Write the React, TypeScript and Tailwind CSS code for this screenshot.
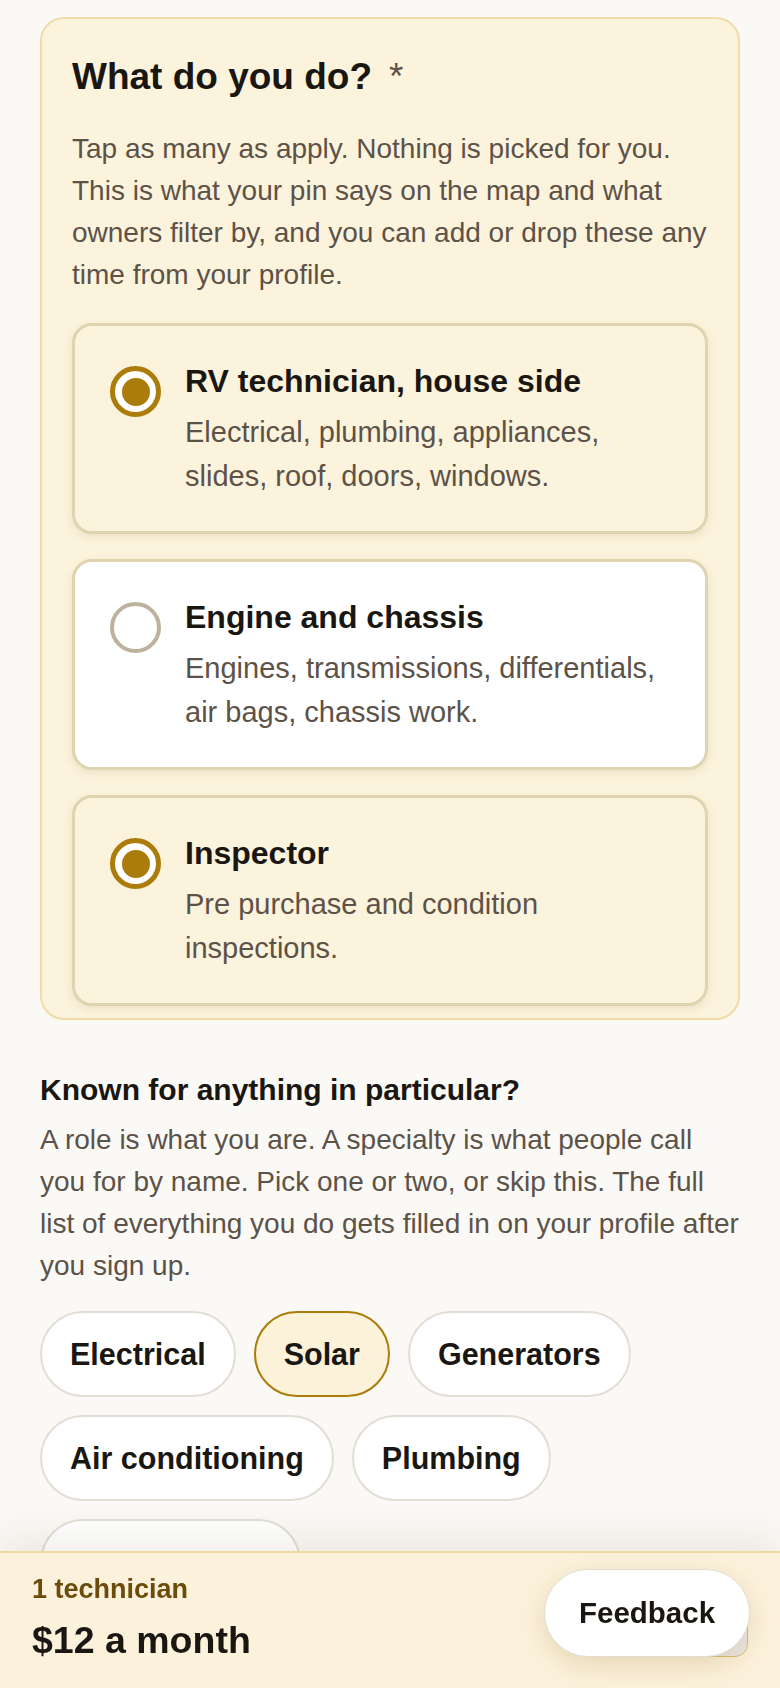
import { useState } from "react"

const roles = [
  {
    id: "house",
    title: "RV technician, house side",
    desc: "Electrical, plumbing, appliances, slides, roof, doors, windows.",
  },
  {
    id: "chassis",
    title: "Engine and chassis",
    desc: "Engines, transmissions, differentials, air bags, chassis work.",
  },
  {
    id: "inspector",
    title: "Inspector",
    desc: "Pre purchase and condition inspections.",
  },
]

const specialties = ["Electrical", "Solar", "Generators", "Air conditioning", "Plumbing"]

function Radio({ checked }: { checked: boolean }) {
  if (checked) {
    return (
      <span className="mt-[5px] flex h-[51px] w-[51px] shrink-0 items-center justify-center rounded-full border-[5px] border-[#ab7b0b] bg-white">
        <span className="h-[28px] w-[28px] rounded-full bg-[#ab7b0b]" />
      </span>
    )
  }
  return <span className="mt-[5px] h-[51px] w-[51px] shrink-0 rounded-full border-[4px] border-[#bdb29c] bg-white" />
}

export default function App() {
  const [picked, setPicked] = useState<string[]>(["house", "inspector"])
  const [special, setSpecial] = useState<string[]>(["Solar"])

  const toggle = (id: string) =>
    setPicked((p) => (p.includes(id) ? p.filter((x) => x !== id) : [...p, id]))
  const toggleSpecial = (s: string) =>
    setSpecial((p) => (p.includes(s) ? p.filter((x) => x !== s) : [...p, s]))

  return (
    <div className="min-h-screen bg-[#faf9f5] font-['Liberation_Sans',Arial,sans-serif] text-[#1a1712]">
      <div className="px-[40px] pt-[17px] pb-[90px]">
        {/* roles card */}
        <section className="rounded-[24px] border-2 border-[#efdca6] bg-[#fcf3dd] px-[30px] pt-[36px] pb-[12px]">
          <h1 className="text-[37px] font-bold leading-[1.2]">
            What do you do?
            <span className="ml-[17px] font-normal text-[#5c5248]">*</span>
          </h1>
          <p className="mt-[29px] text-[28px] leading-[1.5] text-[#5c5248]">
            Tap as many as apply. Nothing is picked for you. This is what your pin says on the map and what owners
            filter by, and you can add or drop these any time from your profile.
          </p>

          <div className="mt-[27px] flex flex-col gap-[25px]">
            {roles.map((r) => {
              const on = picked.includes(r.id)
              return (
                <button
                  key={r.id}
                  type="button"
                  onClick={() => toggle(r.id)}
                  className={`flex items-start gap-[24px] rounded-[20px] border-[3px] border-[#e0d3b0] pl-[35px] pr-[30px] pt-[35px] pb-[33px] text-left shadow-[0_3px_8px_rgba(120,90,30,0.12)] ${
                    on ? "bg-[#fcf3dd]" : "bg-white"
                  }`}
                >
                  <Radio checked={on} />
                  <div className="min-w-0 flex-1">
                    <div className="text-[32px] font-bold leading-[1.25]">{r.title}</div>
                    <div className="mt-[10px] text-[29px] leading-[1.5] text-[#5c5248]">{r.desc}</div>
                  </div>
                </button>
              )
            })}
          </div>
        </section>

        {/* specialties */}
        <section className="mt-[50px]">
          <h2 className="text-[30px] font-bold leading-[1.3]">Known for anything in particular?</h2>
          <p className="mt-[10px] text-[28px] leading-[1.5] text-[#5c5248]">
            A role is what you are. A specialty is what people call you for by name. Pick one or two, or skip this.
            The full list of everything you do gets filled in on your profile after you sign up.
          </p>
          <div className="mt-[24px] flex flex-wrap gap-[18px]">
            {specialties.map((s) => {
              const on = special.includes(s)
              return (
                <button
                  key={s}
                  type="button"
                  onClick={() => toggleSpecial(s)}
                  className={`h-[86px] rounded-full border-2 px-[28px] text-[30.5px] font-bold leading-[1.2] ${
                    on ? "border-[#ab7b0b] bg-[#fcf1d9]" : "border-[#e3ded5] bg-white"
                  }`}
                >
                  {s}
                </button>
              )
            })}
            {/* next chip, its label sits under the price bar */}
            <button
              type="button"
              aria-label="More specialties"
              className="h-[86px] w-[261px] rounded-full border-2 border-[#e3ded5] bg-white"
            />
          </div>
        </section>
      </div>

      {/* sticky price bar */}
      <div className="fixed inset-x-0 bottom-0 flex items-end justify-between border-t-2 border-[#efd9a0] bg-[#fcf2dc] px-[32px] pt-[19px] pb-[25px] shadow-[0_-14px_36px_rgba(70,50,10,0.08)]">
        <div>
          <div className="text-[27px] font-bold leading-[1.3] text-[#6b4c0a]">1 technician</div>
          <div className="mt-[11px] text-[37.5px] font-bold leading-[1.2]">$12 a month</div>
        </div>
        <button
          type="button"
          disabled
          aria-label="Continue"
          className="mb-[6px] h-[56px] w-[170px] rounded-[13px] border-[1.5px] border-[#d9bf78] bg-[#ebe9e6]"
        />
      </div>

      <button
        type="button"
        className="fixed right-[30px] bottom-[31px] flex h-[88px] w-[206px] items-center justify-center rounded-full border-[1.5px] border-[#e2ddd3] bg-white text-[29.5px] font-bold shadow-[0_8px_28px_rgba(140,100,20,0.2)]"
      >
        Feedback
      </button>
    </div>
  )
}
